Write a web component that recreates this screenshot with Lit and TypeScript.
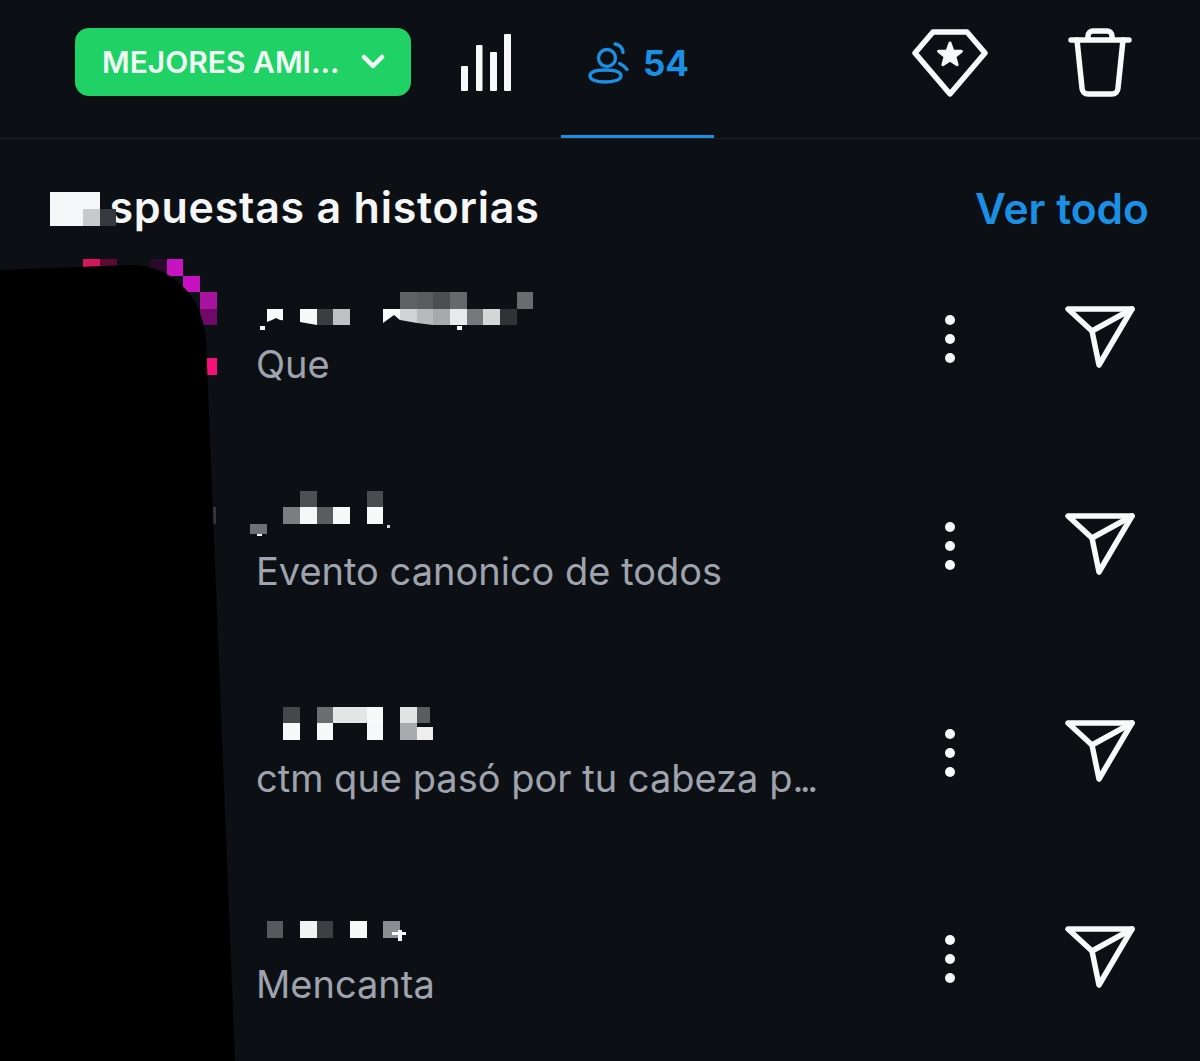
import { LitElement, css, html, svg } from "lit";
import { customElement } from "lit/decorators.js";

type Cell = [x: number, y: number, w: number, h: number, fill: string];

interface Reply {
  top: number;
  text: string;
  clipped?: boolean;
  cells: Cell[];
  trim?: string;
}

const BG = "#0c1014";

const replies: Reply[] = [
  {
    top: 287,
    text: "Que",
    cells: [
      [400, 292, 17, 17, "#5f6164"],
      [417, 292, 16, 17, "#5a5c5f"],
      [433, 292, 17, 17, "#4c4e51"],
      [450, 292, 17, 17, "#66686b"],
      [517, 292, 16, 17, "#6a6b6e"],
      [267, 309, 16, 16, "#f8f9fa"],
      [300, 309, 17, 16, "#f8f9fa"],
      [317, 309, 16, 16, "#3c3e41"],
      [333, 309, 17, 16, "#bfc1c4"],
      [383, 309, 17, 16, "#f8f9fa"],
      [400, 309, 17, 16, "#d2d3d5"],
      [417, 309, 16, 16, "#b8b9bb"],
      [433, 309, 17, 16, "#a8a9ab"],
      [450, 309, 17, 16, "#e8e9ea"],
      [467, 309, 16, 16, "#77787b"],
      [483, 309, 17, 16, "#d5d6d8"],
      [500, 309, 17, 16, "#303236"],
      [260, 326, 5, 4, "#f8f9fa"],
      [457, 326, 5, 4, "#f8f9fa"],
    ],
    // the cut along the lower edge of the name
    trim: "M267 325 L267 322 L272 320 L276 318 L280 320 L290 321 L300 322 L317 325 Z M383 325 L383 323 L394 315 L400 320 L417 323 L433 325 Z",
  },
  {
    top: 494,
    text: "Evento canonico de todos",
    cells: [
      [300, 491, 17, 16, "#4d4f52"],
      [367, 491, 16, 16, "#4a4c4f"],
      [283, 507, 17, 17, "#7c7d80"],
      [300, 507, 17, 17, "#f5f6f7"],
      [317, 507, 16, 17, "#5a5c5f"],
      [333, 507, 17, 17, "#f8f9fa"],
      [367, 507, 16, 17, "#f8f9fa"],
      [250, 524, 17, 10, "#6f7073"],
      [257, 534, 5, 2, "#f8f9fa"],
      [387, 525, 3, 3, "#d5d6d8"],
    ],
  },
  {
    top: 700,
    text: "ctm que pasó por tu cabeza p",
    clipped: true,
    cells: [
      [283, 706, 17, 16, "#45474a"],
      [317, 706, 16, 16, "#6c6d70"],
      [333, 706, 34, 16, "#e3e5e6"],
      [367, 706, 16, 16, "#f8f9fa"],
      [400, 706, 17, 16, "#e2e3e5"],
      [417, 706, 13, 16, "#5a5c60"],
      [283, 722, 17, 17, "#f7f8f9"],
      [317, 722, 16, 17, "#f7f8f8"],
      [367, 722, 16, 17, "#f7f8f9"],
      [400, 722, 17, 17, "#aaabae"],
      [417, 726, 16, 13, "#eeeeee"],
    ],
  },
  {
    top: 907,
    text: "Mencanta",
    cells: [
      [267, 921, 16, 17, "#58595c"],
      [300, 921, 17, 17, "#f2f3f3"],
      [317, 921, 16, 17, "#3d3f42"],
      [350, 921, 17, 17, "#f8f9f9"],
      [383, 921, 17, 17, "#8c8d90"],
      [392, 932, 14, 3, "#f8f9fa"],
      [398, 930, 4, 11, "#f8f9fa"],
    ],
  },
];

// title blur, story ring fragments
const overlayCells: Cell[] = [
  [50, 192, 50, 34, "#f6f7f8"],
  [83, 209, 17, 17, "#c8c9ca"],
  [100, 209, 16, 17, "#35383c"],
  [83, 259, 17, 17, "#d4175c"],
  [100, 259, 17, 17, "#5a0a33"],
  [150, 259, 17, 17, "#2a0a2a"],
  [167, 259, 16, 17, "#c814c0"],
  [183, 276, 17, 16, "#c810c0"],
  [200, 292, 17, 17, "#a814a0"],
  [200, 309, 17, 16, "#700a68"],
  [207, 358, 10, 17, "#f5107a"],
  [213, 507, 3, 17, "#33363a"],
];

const rects = (cells: Cell[]) =>
  cells.map(
    ([x, y, w, h, fill]) =>
      svg`<rect x=${x} y=${y} width=${w} height=${h} fill=${fill}></rect>`
  );

@customElement("app-root")
export class AppRoot extends LitElement {
  static styles = css`
    :host {
      display: block;
      position: relative;
      width: 1200px;
      height: 1061px;
      overflow: hidden;
      background: #0c1014;
      font-family: Inter, "Liberation Sans", sans-serif;
      color: #f5f6f7;
    }
    svg {
      display: block;
      flex: none;
    }
    .header {
      display: flex;
      align-items: flex-start;
      box-sizing: content-box;
      height: 110px;
      padding: 28px 68px 0 75px;
      border-bottom: 1px solid #1f2327;
    }
    .audience {
      display: flex;
      align-items: center;
      box-sizing: border-box;
      width: 336px;
      height: 68px;
      padding: 0 26px 0 27px;
      border-radius: 14px;
      background: #20d166;
      color: #f0fdf5;
      font-size: 30px;
      font-weight: 600;
      white-space: nowrap;
    }
    .audience svg {
      margin-left: auto;
    }
    .bars {
      margin: 6px 0 0 50px;
    }
    .viewers {
      display: flex;
      align-items: center;
      gap: 13px;
      box-sizing: border-box;
      width: 153px;
      height: 138px;
      margin: -28px 0 0 49px;
      padding: 0 0 9px 25px;
      border-bottom: 3px solid #1a8fe3;
      color: #1a8fe3;
      font-size: 35px;
      font-weight: 700;
    }
    .actions {
      display: flex;
      align-items: center;
      gap: 80px;
      margin-left: auto;
    }
    .section-head {
      display: flex;
      justify-content: space-between;
      align-items: center;
      height: 52px;
      padding: 43px 51px 0 50px;
    }
    .section-head h2 {
      margin: 0 0 2px 5px;
      font-size: 43px;
      font-weight: 600;
      letter-spacing: 0.75px;
      white-space: nowrap;
    }
    .covered {
      color: transparent;
    }
    .section-head a {
      color: #1a8fe3;
      font-size: 42.5px;
      font-weight: 600;
    }
    .row {
      display: flex;
      align-items: center;
      box-sizing: border-box;
      height: 206.67px;
      padding: 0 65px 0 257px;
    }
    .body {
      flex: 1;
      min-width: 0;
    }
    .name {
      overflow: visible;
    }
    .message {
      height: 44px;
      margin-left: -1px;
      line-height: 42px;
      color: #9ea3ae;
      font-size: 38px;
      white-space: nowrap;
    }
    .tail {
      letter-spacing: -3.5px;
    }
    .more {
      margin: 4px 110px 0 0;
    }
    .overlay {
      position: absolute;
      inset: 0;
      pointer-events: none;
    }
  `;

  private chevron() {
    return html`<svg width="24" height="16" viewBox="0 0 24 16" fill="none" stroke="currentColor" stroke-width="4.5" stroke-linecap="round" stroke-linejoin="round">
      <path d="M3 3 L12 12 L21 3"></path>
    </svg>`;
  }

  private bars() {
    return html`<svg class="bars" width="51" height="58" viewBox="0 0 51 58" fill="#f8f9fa">
      <rect x="0" y="32" width="7" height="25" rx="1"></rect>
      <rect x="15" y="11" width="6.5" height="46" rx="1"></rect>
      <rect x="29" y="18" width="7" height="39" rx="1"></rect>
      <rect x="43" y="0" width="7" height="57" rx="1"></rect>
    </svg>`;
  }

  private people() {
    return html`<svg width="44" height="46" viewBox="0 0 44 46" fill="none" stroke="currentColor" stroke-width="3.3" stroke-linecap="round">
      <circle cx="21" cy="18" r="8.5"></circle>
      <path d="M4 36 C4 31 11 30 19 30 C27 30 35 31 35 36 C35 40 27 42 19 42 C11 42 4 40 4 36 Z"></path>
      <path d="M29 4 C33.5 4.5 37 8 37 12.5"></path>
      <path d="M33.5 23.5 C36.5 24.5 39 27 41 29.5"></path>
    </svg>`;
  }

  private diamond() {
    return html`<svg width="76" height="70" viewBox="0 0 76 70" fill="none" stroke="#f8f9fa" stroke-width="5.5" stroke-linejoin="round" stroke-linecap="round">
      <path d="M3 25 L21 4 H55 L73 25 L38 66 Z"></path>
      <path fill="#f8f9fa" stroke-width="3" d="M38 15 L40.9 23 L49.4 23.3 L42.8 28.5 L45.1 36.7 L38 32 L30.9 36.7 L33.2 28.5 L26.6 23.3 L35.1 23 Z"></path>
    </svg>`;
  }

  private trash() {
    return html`<svg width="64" height="70" viewBox="0 0 64 70" fill="none" stroke="#f8f9fa" stroke-width="5.5" stroke-linecap="round" stroke-linejoin="round">
      <path d="M3 12 H61"></path>
      <path d="M20 11 V8 a5 5 0 0 1 5 -5 h14 a5 5 0 0 1 5 5 v3"></path>
      <path d="M9 12 L14 60 a6 6 0 0 0 6 6 H44 a6 6 0 0 0 6 -6 L55 12"></path>
    </svg>`;
  }

  private dots() {
    return html`<svg class="more" width="10" height="48" viewBox="0 0 10 48" fill="#f8f9fa">
      <circle cx="5" cy="5" r="5"></circle>
      <circle cx="5" cy="24" r="5"></circle>
      <circle cx="5" cy="43" r="5"></circle>
    </svg>`;
  }

  private send() {
    return html`<svg width="70" height="62" viewBox="0 0 70 62" fill="none" stroke="#f8f9fa" stroke-width="5.5" stroke-linecap="round" stroke-linejoin="round">
      <path d="M3 3 H67 L34 59 L27 25 Z"></path>
      <path d="M27 25 L67 3"></path>
    </svg>`;
  }

  private renderReply(reply: Reply) {
    return html`<div class="row">
      <div class="body">
        <svg class="name" width="300" height="56" viewBox="257 ${reply.top} 300 56">
          ${rects(reply.cells)}
          ${reply.trim ? svg`<path d=${reply.trim} fill=${BG}></path>` : ""}
        </svg>
        <div class="message">${reply.text}${reply.clipped ? html`<span class="tail">...</span>` : ""}</div>
      </div>
      ${this.dots()} ${this.send()}
    </div>`;
  }

  render() {
    return html`
      <header class="header">
        <div class="audience">MEJORES AMI... ${this.chevron()}</div>
        ${this.bars()}
        <div class="viewers">${this.people()}<span>54</span></div>
        <div class="actions">${this.diamond()} ${this.trash()}</div>
      </header>
      <div class="section-head">
        <h2><span class="covered">Re</span>spuestas a historias</h2>
        <a>Ver todo</a>
      </div>
      ${replies.map((reply) => this.renderReply(reply))}
      <svg class="overlay" width="1200" height="1061" viewBox="0 0 1200 1061">
        ${rects(overlayCells)}
        <path d="M0 270 L130 265 C170 264 203 295 206 340 L235 1061 L0 1061 Z" fill="#000"></path>
      </svg>
    `;
  }
}
